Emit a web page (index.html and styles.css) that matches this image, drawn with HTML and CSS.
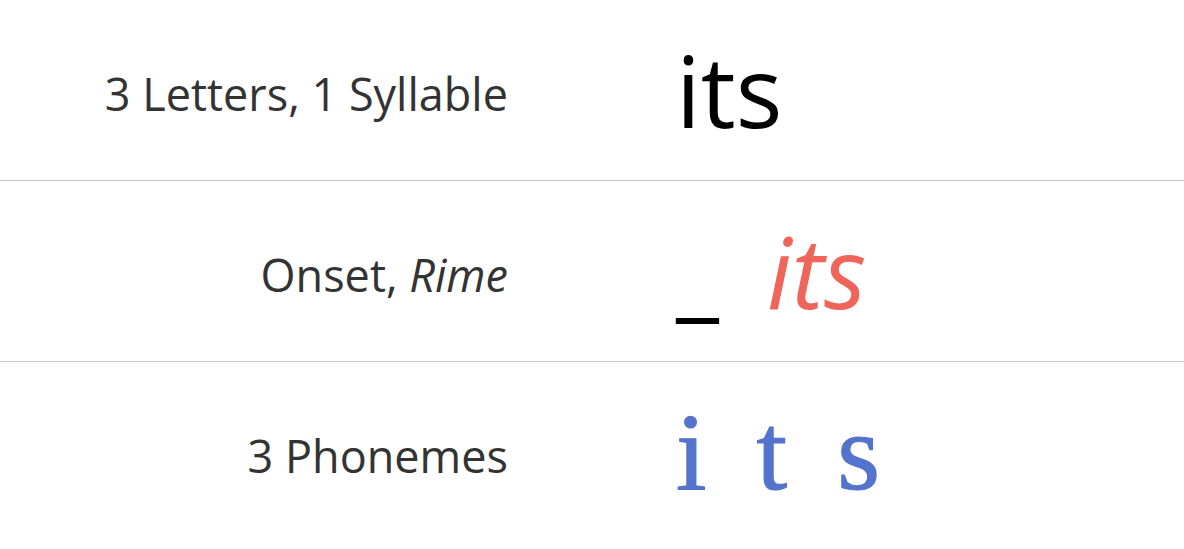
FILE: index.html
```html
<!DOCTYPE html>
<html>
<head>
<meta charset="utf-8">
<link rel="stylesheet" href="styles.css">
</head>
<body>
<div class="table">
  <div class="row">
    <div class="label">3 Letters, 1 Syllable</div>
    <div class="word plain">its</div>
  </div>
  <div class="row">
    <div class="label">Onset, <em>Rime</em></div>
    <div class="word split"><span class="onset">_</span><span class="rime">its</span></div>
  </div>
  <div class="row">
    <div class="label">3 Phonemes</div>
    <div class="word phonemes"><span>i</span><span>t</span><span>s</span></div>
  </div>
</div>
</body>
</html>
```
FILE: styles.css
```css
html, body {
  margin: 0;
  padding: 0;
  background: #fff;
}
.table {
  width: 1184px;
}
.row {
  display: grid;
  grid-template-columns: 508px 1fr;
  column-gap: 168px;
  align-items: center;
  height: 181px;
  border-bottom: 1px solid #c8c8c8;
  box-sizing: border-box;
}
.row:last-child {
  border-bottom: none;
}
.label {
  font-family: "Open Sans", sans-serif;
  font-size: 45px;
  color: #333;
  text-align: right;
  padding-top: 6px;
}
.label em {
  font-style: italic;
}
.word {
  font-family: "Open Sans", sans-serif;
  font-size: 98px;
  color: #000;
  display: flex;
  align-items: baseline;
}
.onset {
  color: #000;
  margin-right: 48px;
}
.rime {
  color: #f06559;
  font-style: italic;
}
.phonemes {
  font-family: "Liberation Serif", serif;
  font-size: 110px;
  color: #5473cc;
  -webkit-text-stroke: 1.2px #5473cc;
  gap: 50px;
}
```
